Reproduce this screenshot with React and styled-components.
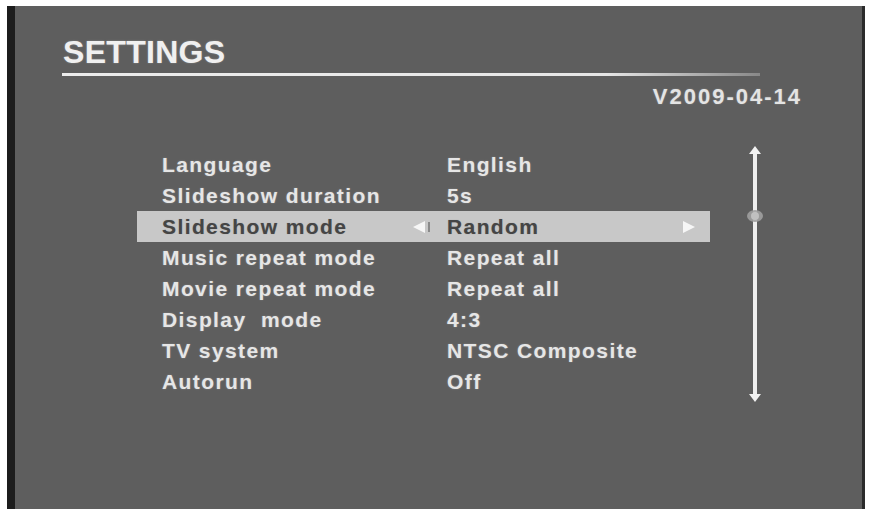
import React from 'react'
import styled, {createGlobalStyle} from 'styled-components'

const Global = createGlobalStyle`
	html, body {
		margin: 0;
		padding: 0;
		background: #ffffff;
	}
	body {
		font-family: "Liberation Sans", Arial, sans-serif;
	}
`

const Screen = styled.div`
	width: 870px;
	height: 509px;
	overflow: hidden;
	padding: 6px 5px 0 7px;
	box-sizing: border-box;
	background: #fff;
`
const Panel = styled.div`
	height: 503px;
	box-sizing: border-box;
	background: #5e5e5e;
	border-left: 8px solid #1d1d1d;
	border-right: 3px solid #2b2b2b;
	padding: 28px 62px 0 48px;
	color: #e8e8e8;
`
const Title = styled.div`
	font-size: 32px;
	line-height: 36px;
	font-weight: bold;
	letter-spacing: 0.3px;
	color: #f0f0f0;
	text-shadow: 0 0 2px rgba(255,255,255,0.3);
`
const Rule = styled.div`
	margin-top: 3px;
	margin-left: -1px;
	width: 698px;
	height: 3px;
	background: linear-gradient(to right, #ececec 0%, #e6e6e6 78%, rgba(200,200,200,0.4) 100%);
`
const Version = styled.div`
	margin-top: 9px;
	text-align: right;
	font-size: 22px;
	line-height: 24px;
	font-weight: bold;
	letter-spacing: 2px;
	margin-right: -2px;
	color: #e4e4e4;
	text-shadow: 0 0 2px rgba(255,255,255,0.25);
`
const Body = styled.div`
	display: flex;
	margin-top: 40px;
	margin-left: 74px;
`
const List = styled.div`
	width: 573px;
	display: flex;
	flex-direction: column;
`
const Row = styled.div`
	display: grid;
	grid-template-columns: 251px 34px 1fr 27px;
	align-items: center;
	height: 31px;
	padding-left: 25px;
	font-size: 21px;
	font-weight: bold;
	letter-spacing: 1.4px;
	background: ${p => p.active ? '#c8c8c8' : 'transparent'};
	color: ${p => p.active ? '#454545' : '#e6e6e6'};
	text-shadow: ${p => p.active ? '0 0 1px rgba(0,0,0,0.25)' : '0 0 2px rgba(255,255,255,0.25)'};
	white-space: pre;
`
const Arrow = styled.span`
	display: flex;
	align-items: center;
	gap: 3px;
`
const Tri = styled.span`
	width: 0;
	height: 0;
	border-top: 6px solid transparent;
	border-bottom: 6px solid transparent;
	${p => p.dir === 'left'
		? 'border-right: 12px solid #f6f6f6;'
		: 'border-left: 12px solid #f6f6f6;'}
`
const Tick = styled.span`
	width: 2px;
	height: 10px;
	background: #8a8a8a;
`
const Scroll = styled.div`
	margin-left: 37px;
	margin-top: -3px;
	width: 16px;
`

const items = [
	['Language', 'English'],
	['Slideshow duration', '5s'],
	['Slideshow mode', 'Random'],
	['Music repeat mode', 'Repeat all'],
	['Movie repeat mode', 'Repeat all'],
	['Display  mode', '4:3'],
	['TV system', 'NTSC Composite'],
	['Autorun', 'Off'],
]

const ScrollBar = () => (
	<svg width="16" height="256" viewBox="0 0 16 256">
		<rect x="6" y="5" width="4" height="246" fill="#efefef"/>
		<path d="M8 0 L14 8 L2 8 Z" fill="#f2f2f2"/>
		<path d="M8 256 L14 248 L2 248 Z" fill="#f2f2f2"/>
		<ellipse cx="8" cy="70" rx="8" ry="6" fill="#a0a0a0" opacity="0.9"/>
		<ellipse cx="8" cy="70" rx="4" ry="4" fill="#c0c0c0"/>
	</svg>
)

const App = () => {
	return <>
		<Global/>
		<Screen>
			<Panel>
				<Title>SETTINGS</Title>
				<Rule/>
				<Version>V2009-04-14</Version>
				<Body>
					<List>
						{items.map(([label, value], i) => {
							const active = i === 2
							return <Row key={label} active={active}>
								<span>{label}</span>
								<Arrow>{active && <><Tri dir="left"/><Tick/></>}</Arrow>
								<span>{value}</span>
								<Arrow>{active && <Tri dir="right"/>}</Arrow>
							</Row>
						})}
					</List>
					<Scroll><ScrollBar/></Scroll>
				</Body>
			</Panel>
		</Screen>
	</>
}
export default App
